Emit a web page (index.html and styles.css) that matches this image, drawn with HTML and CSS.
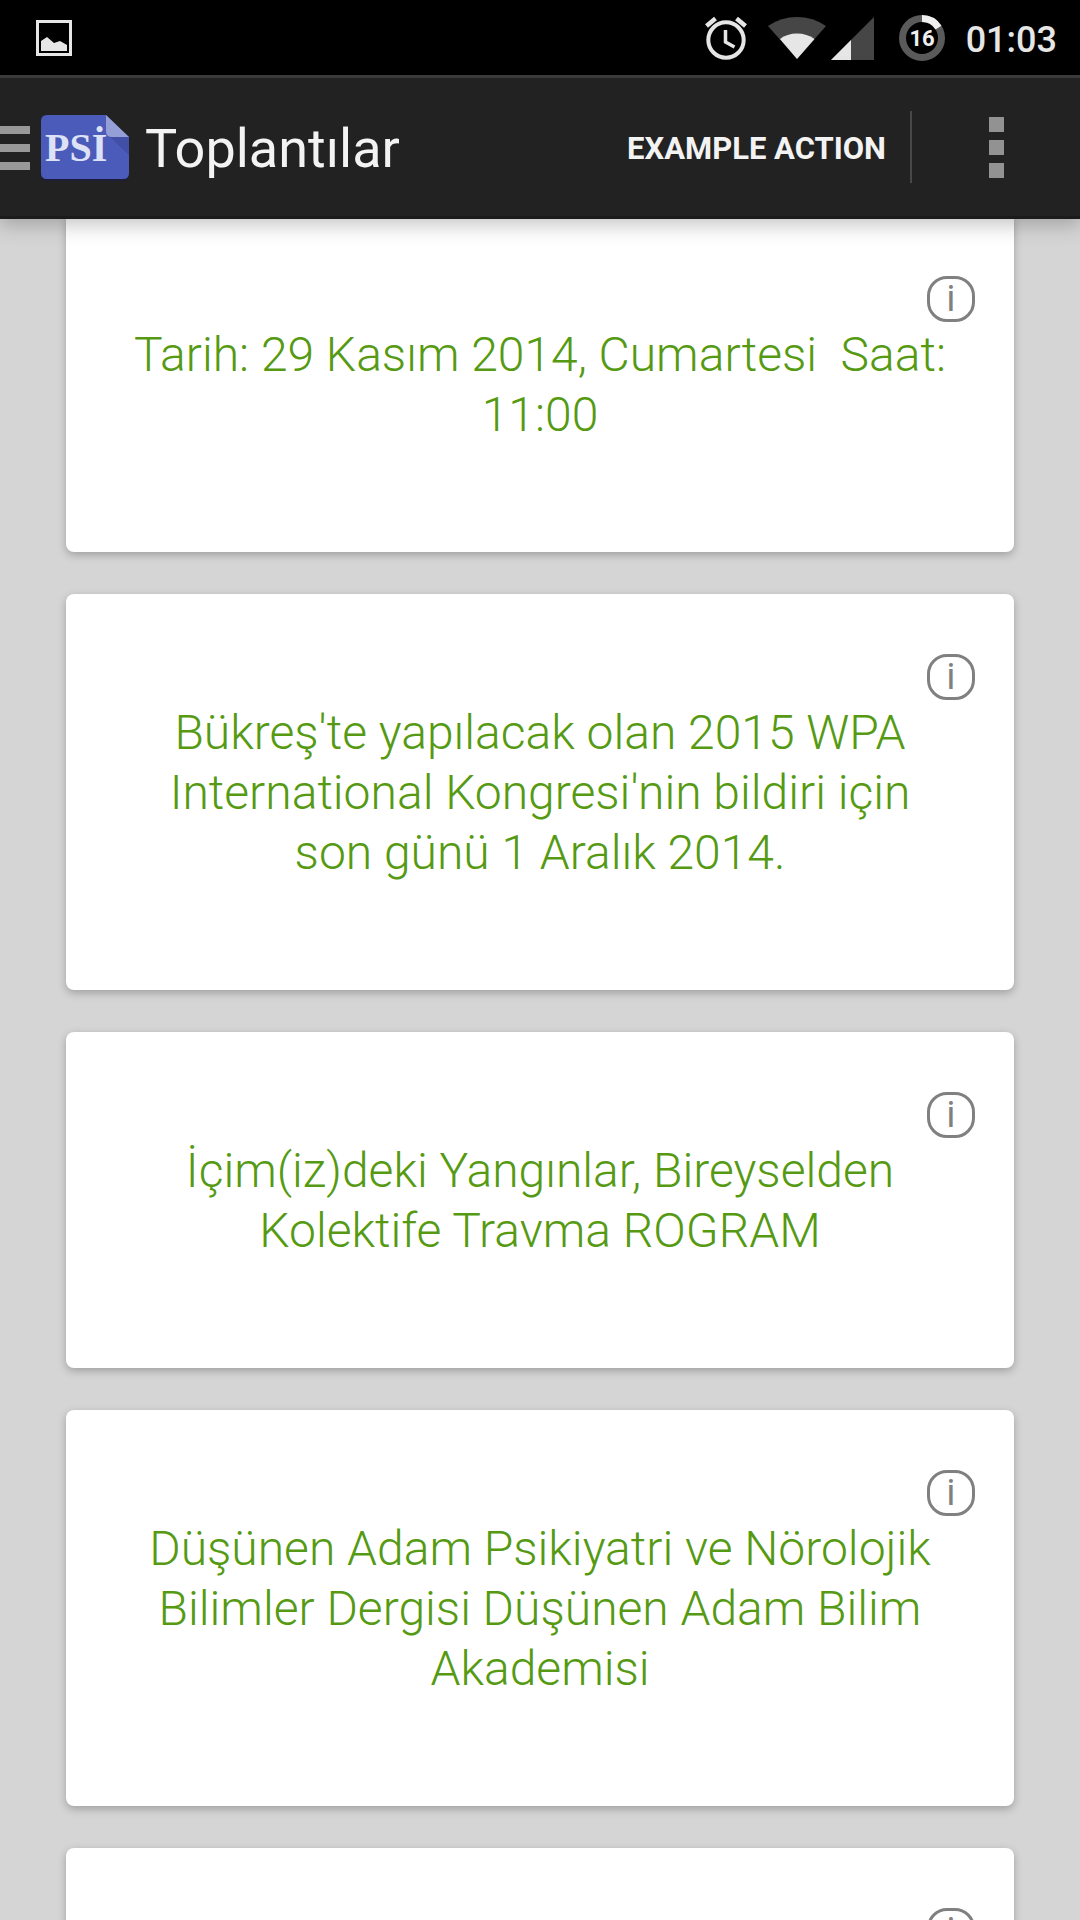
FILE: index.html
```html
<!DOCTYPE html>
<html lang="tr">
<head>
  <meta charset="UTF-8">
  <meta name="viewport" content="width=device-width, initial-scale=1.0">
  <title>Toplantılar</title>
  <link rel="stylesheet" href="styles.css">
</head>
<body>

  <div class="status-bar">
    <svg class="status-picture" width="36" height="36" viewBox="0 0 36 36">
      <rect x="1.5" y="1.5" width="33" height="33" fill="none" stroke="#e6e6e6" stroke-width="3"/>
      <path d="M5 21 L11 17 L18 23 L24 21 L31 25 V31 H5 Z" fill="#e6e6e6"/>
    </svg>

    <svg class="status-alarm" width="42" height="46" viewBox="0 0 42 46">
      <circle cx="21" cy="25" r="17.7" fill="none" stroke="#e6e6e6" stroke-width="4"/>
      <path d="M20.5 15 V27 L29.5 32" fill="none" stroke="#e6e6e6" stroke-width="3.5"/>
      <path d="M1.500 11 L10.500 3.500 M31.500 3.500 L40.500 11" stroke="#e6e6e6" stroke-width="4.500"/>
    </svg>

    <svg class="status-wifi" width="58" height="46" viewBox="0 0 58 46">
      <path d="M29 44 L0 11 Q13 2 29 2 Q45 2 58 11 Z" fill="#464646"/>
      <path d="M29 44 L12 24 Q19 18.500 29 18.500 Q39 18.500 46.500 24 Z" fill="#e6e6e6"/>
    </svg>

    <svg class="status-signal" width="43" height="46" viewBox="0 0 43 46">
      <path d="M0 45 L43 2 V45 Z" fill="#464646"/>
      <path d="M0 45 L20 25 V45 Z" fill="#e6e6e6"/>
    </svg>

    <svg class="status-battery" width="46" height="46" viewBox="0 0 46 46">
      <circle cx="23" cy="23" r="19.500" fill="none" stroke="#5a5a5a" stroke-width="7"/>
      <path d="M23 3.500 A19.500 19.500 0 0 1 39.500 12.600" fill="none" stroke="#f0f0f0" stroke-width="7"/>
      <text x="23" y="31" text-anchor="middle" class="battery-text">16</text>
    </svg>

    <span class="clock">01:03</span>
  </div>

  <header class="action-bar">
    <button class="menu-btn" aria-label="Menu">
      <span></span>
      <span></span>
      <span></span>
    </button>

    <svg class="logo" width="88" height="66" viewBox="0 0 88 66">
      <rect x="0" y="2" width="88" height="64" rx="6" fill="#1b1d3a"/>
      <path d="M6 0 H65 L88 22 V58 Q88 64 82 64 H6 Q0 64 0 58 V6 Q0 0 6 0 Z" fill="#4a5bb9"/>
      <path d="M65 0 H88 V22 Z" fill="#222222"/>
      <path d="M69 22 H88 V40 Z" fill="#4150a6"/>
      <path d="M65 0 L88 22 H71 Q65 22 65 16 Z" fill="#949fd8"/>
      <text x="4" y="46" class="logo-text">PSİ</text>
    </svg>

    <h1>Toplantılar</h1>

    <button class="action-btn">EXAMPLE ACTION</button>

    <button class="more-btn" aria-label="More">
      <span></span>
      <span></span>
      <span></span>
    </button>
  </header>

  <main class="card-list">
    <article class="card card-scrolled">
      <button class="info-btn">i</button>
      <p>Tarih: 29 Kasım 2014, Cumartesi&nbsp; Saat: 11:00</p>
    </article>

    <article class="card">
      <button class="info-btn">i</button>
      <p>Bükreş'te yapılacak olan 2015 WPA International Kongresi'nin bildiri için son günü 1 Aralık 2014.</p>
    </article>

    <article class="card">
      <button class="info-btn">i</button>
      <p>İçim(iz)deki Yangınlar, Bireyselden Kolektife Travma ROGRAM</p>
    </article>

    <article class="card">
      <button class="info-btn">i</button>
      <p>Düşünen Adam Psikiyatri ve Nörolojik Bilimler Dergisi Düşünen Adam Bilim Akademisi</p>
    </article>

    <article class="card">
      <button class="info-btn">i</button>
    </article>
  </main>

</body>
</html>
```

FILE: styles.css
```css
* {
  box-sizing: border-box;
}

body {
  margin: 0;
  height: 100vh;
  display: flex;
  flex-direction: column;
  overflow: hidden;
  background: #d5d5d5;
  font-family: Roboto, "Noto Sans", sans-serif;
}

button {
  padding: 0;
  border: none;
  background: none;
  color: inherit;
  font-family: inherit;
  cursor: pointer;
}

svg {
  display: block;
  flex: none;
}

/* status bar */
.status-bar {
  flex: none;
  display: flex;
  align-items: center;
  height: 75px;
  padding: 0 23px 0 36px;
  background: #000;
  color: #e6e6e6;
}

.status-picture {
  margin-right: auto;
}

.status-alarm {
  margin-right: 21px;
}

.status-wifi {
  margin-right: 5px;
}

.status-signal {
  margin-right: 25px;
}

.status-battery {
  margin-right: 21px;
}

.battery-text {
  fill: #f0f0f0;
  font-size: 22px;
  font-weight: 700;
}

.clock {
  padding-top: 4px;
  font-size: 36px;
  font-weight: 500;
  line-height: 48px;
}

/* action bar */
.action-bar {
  position: relative;
  z-index: 1;
  flex: none;
  display: flex;
  align-items: center;
  height: 141px;
  border-top: 3px solid #3a3a3a;
  background: #222;
  color: #f3f3f3;
  box-shadow: 0 3px 0 #1b1b1b, 0 6px 20px 2px rgba(0, 0, 0, 0.25);
}

.menu-btn {
  display: grid;
  gap: 10px;
  width: 30px;
  margin-right: 11px;
  padding-top: 2px;
}

.menu-btn span {
  height: 8px;
  background: #999;
}

.logo {
  margin-top: 2px;
}

.logo-text {
  fill: #dde1f6;
  font-family: "Liberation Serif", serif;
  font-size: 40px;
  font-weight: 700;
}

h1 {
  margin: 0 auto 0 16px;
  padding-top: 4px;
  font-size: 54px;
  font-weight: 400;
  line-height: 64px;
}

.action-btn {
  height: 72px;
  padding: 2px 24px 0 0;
  border-right: 2px solid #484848;
  font-size: 31px;
  font-weight: 700;
}

.more-btn {
  display: grid;
  justify-content: center;
  gap: 8px;
  width: 168px;
}

.more-btn span {
  width: 15px;
  height: 15px;
  background: #929292;
}

/* cards */
.card-list {
  display: flex;
  flex-direction: column;
  gap: 42px;
  padding: 0 66px;
}

.card {
  flex: none;
  display: flex;
  flex-direction: column;
  padding: 60px 39px 107px;
  border-radius: 8px;
  background: #fff;
  box-shadow: 0 3px 8px rgba(0, 0, 0, 0.25);
}

.card-scrolled {
  border-radius: 0 0 8px 8px;
}

.card p {
  margin: 3px 0 0;
  padding: 0 26px;
  color: #559a12;
  font-size: 48px;
  font-weight: 300;
  line-height: 60px;
  text-align: center;
}

.info-btn {
  align-self: flex-end;
  width: 48px;
  height: 46px;
  border: 3px solid #808080;
  border-radius: 20px;
  color: #808080;
  font-size: 36px;
  line-height: 36px;
}
```
